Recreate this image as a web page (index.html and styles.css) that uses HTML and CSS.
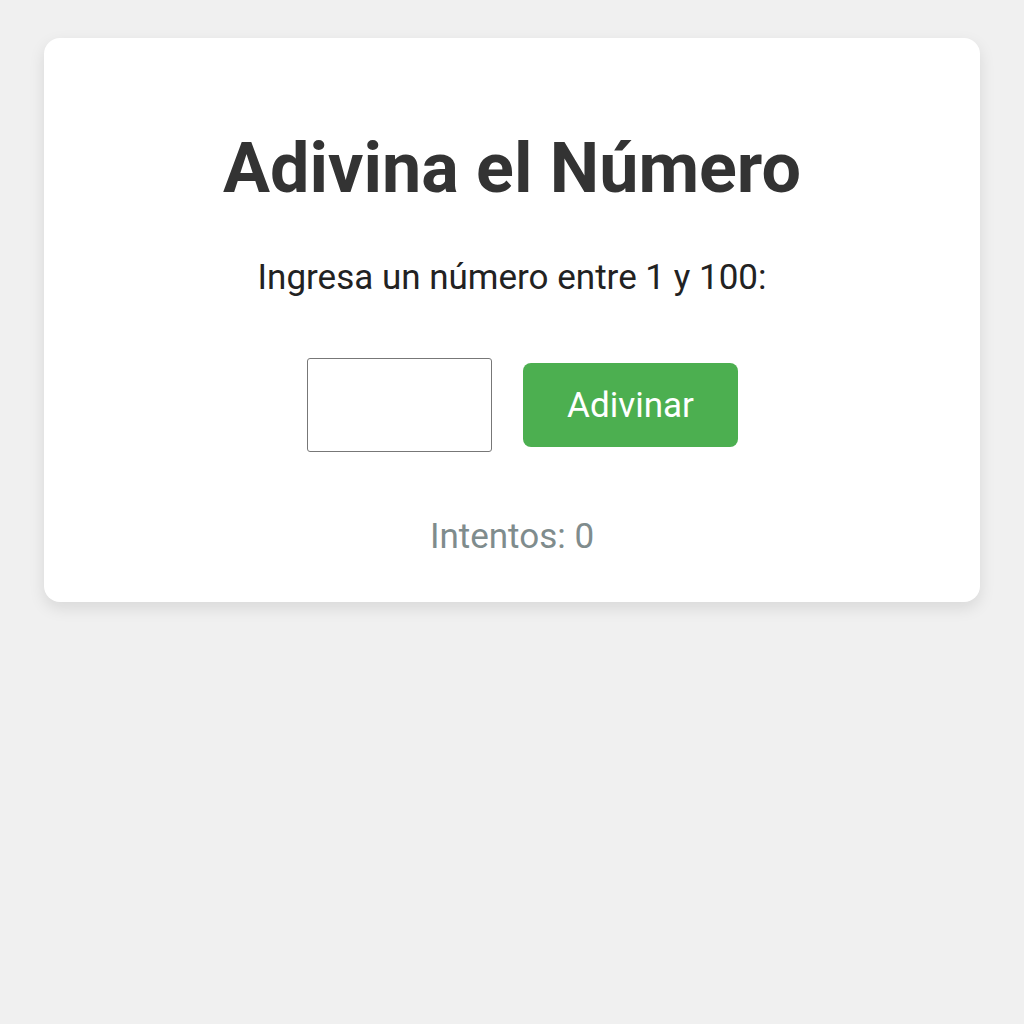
FILE: index.html
```html
<!DOCTYPE html>
<html lang="es">

<head>
  <meta charset="UTF-8">
  <meta name="viewport" content="width=device-width, initial-scale=1.0">
  <title>Adivina el Número</title>
  <link rel="stylesheet" href="styles.css">
</head>

<body>

  <div class="game">
    <h1 class="title">Adivina el Número</h1>
    <p class="prompt">Ingresa un número entre 1 y 100:</p>
    <div class="guess">
      <input class="guess-input" type="number" min="1" max="100">
      <button class="guess-btn">Adivinar</button>
    </div>
    <p class="attempts">Intentos: 0</p>
  </div>

</body>

</html>
```

FILE: styles.css
```css
body {
  margin: 0;
  padding: 38px 44px;
  background-color: #f0f0f0;
  font-family: Roboto, "Liberation Sans", sans-serif;
}

h1,
p {
  margin: 0;
}

.game {
  background-color: #fff;
  border-radius: 16px;
  box-shadow: 0 6px 16px rgba(0, 0, 0, 0.1);
  padding: 89px 40px 45px;
  text-align: center;
}

.title {
  font-size: 70px;
  font-weight: 700;
  color: #333;
  margin-bottom: 48px;
}

.prompt {
  font-size: 35px;
  color: #222;
  margin-bottom: 60px;
}

.guess {
  display: flex;
  justify-content: center;
  align-items: center;
  gap: 31px;
  padding-left: 21px;
  margin-bottom: 64px;
}

.guess-input {
  box-sizing: border-box;
  width: 185px;
  height: 94px;
  border: 1px solid #777;
  border-radius: 3px;
  font-size: 35px;
  font-family: inherit;
}

.guess-btn {
  width: 215px;
  height: 84px;
  border: none;
  border-radius: 8px;
  background-color: #4caf50;
  color: #fff;
  font-size: 35px;
  font-family: inherit;
}

.attempts {
  font-size: 35px;
  color: #7f8c8d;
}
```
